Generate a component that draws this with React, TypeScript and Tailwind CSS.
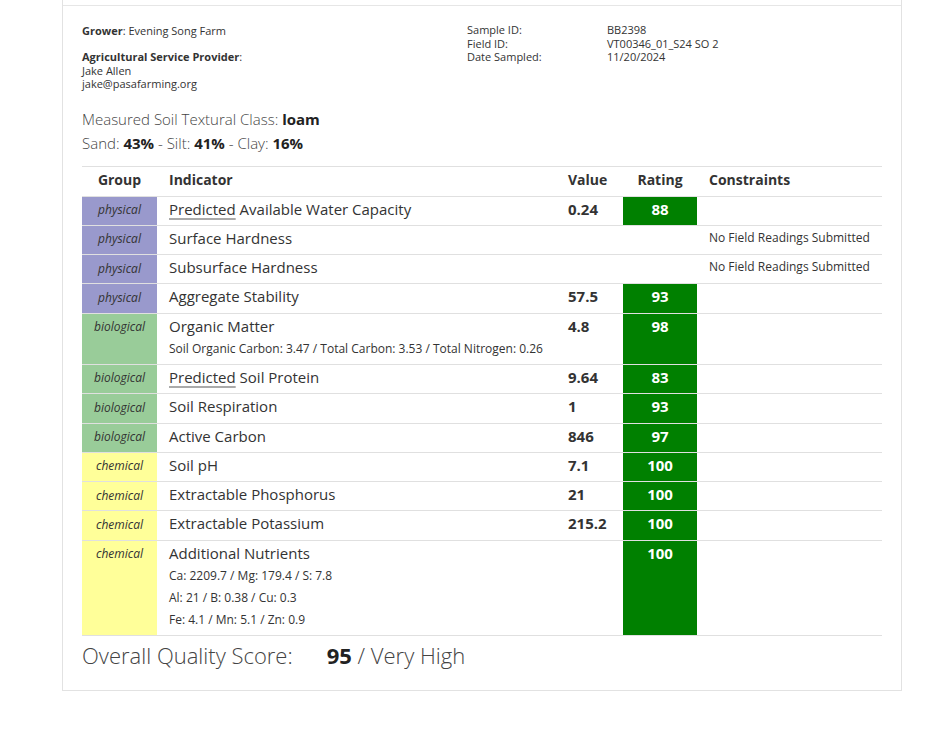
import React from "react"

type Group = "physical" | "biological" | "chemical"

interface Row {
    group: Group
    indicator: string
    predicted?: boolean
    sub?: string[]
    value?: string
    rating?: number
    constraint?: string
}

const groupBg: Record<Group, string> = {
    physical: "bg-[#9999cc]",
    biological: "bg-[#99cc99]",
    chemical: "bg-[#ffff99]",
}

const rows: Row[] = [
    { group: "physical", indicator: "Available Water Capacity", predicted: true, value: "0.24", rating: 88 },
    { group: "physical", indicator: "Surface Hardness", constraint: "No Field Readings Submitted" },
    { group: "physical", indicator: "Subsurface Hardness", constraint: "No Field Readings Submitted" },
    { group: "physical", indicator: "Aggregate Stability", value: "57.5", rating: 93 },
    {
        group: "biological",
        indicator: "Organic Matter",
        sub: ["Soil Organic Carbon: 3.47 / Total Carbon: 3.53 / Total Nitrogen: 0.26"],
        value: "4.8",
        rating: 98,
    },
    { group: "biological", indicator: "Soil Protein", predicted: true, value: "9.64", rating: 83 },
    { group: "biological", indicator: "Soil Respiration", value: "1", rating: 93 },
    { group: "biological", indicator: "Active Carbon", value: "846", rating: 97 },
    { group: "chemical", indicator: "Soil pH", value: "7.1", rating: 100 },
    { group: "chemical", indicator: "Extractable Phosphorus", value: "21", rating: 100 },
    { group: "chemical", indicator: "Extractable Potassium", value: "215.2", rating: 100 },
    {
        group: "chemical",
        indicator: "Additional Nutrients",
        sub: [
            "Ca: 2209.7 / Mg: 179.4 / S: 7.8",
            "Al: 21 / B: 0.38 / Cu: 0.3",
            "Fe: 4.1 / Mn: 5.1 / Zn: 0.9",
        ],
        rating: 100,
    },
]

export default function App() {
    return (
        <div className="min-h-screen bg-white font-['Open_Sans',sans-serif] text-[#333]">
            <div className="ml-[62px] w-[840px] border-x border-b border-[#e2e2e2] px-[19px] pb-[19px]">
                <div className="-mx-[19px] h-[6px] border-b border-[#e6e6e6]" />

                {/* sample info */}
                <div className="flex pt-[18px] text-[11px] leading-[13.5px]">
                    <div className="w-[385px]">
                        <p>
                            <b>Grower</b>: Evening Song Farm
                        </p>
                        <p className="mt-[12.5px]">
                            <b>Agricultural Service Provider</b>:
                        </p>
                        <p>Jake Allen</p>
                        <p>jake@pasafarming.org</p>
                    </div>
                    <div className="-mt-px flex">
                        <div className="w-[140px]">
                            <p>Sample ID:</p>
                            <p>Field ID:</p>
                            <p>Date Sampled:</p>
                        </div>
                        <div>
                            <p>BB2398</p>
                            <p>VT00346_01_S24 SO 2</p>
                            <p>11/20/2024</p>
                        </div>
                    </div>
                </div>

                <div className="mt-4 text-[15px] leading-[24px] font-light text-[#444]">
                    <p>
                        Measured Soil Textural Class: <b className="font-bold text-[#222]">loam</b>
                    </p>
                    <p>
                        Sand: <b className="font-bold text-[#222]">43%</b> - Silt:{" "}
                        <b className="font-bold text-[#222]">41%</b> - Clay:{" "}
                        <b className="font-bold text-[#222]">16%</b>
                    </p>
                </div>

                <table className="mt-[11px] w-[800px] table-fixed border-collapse">
                    <colgroup>
                        <col className="w-[75px]" />
                        <col className="w-[399px]" />
                        <col className="w-[67px]" />
                        <col className="w-[74px]" />
                        <col className="w-[185px]" />
                    </colgroup>
                    <thead>
                        <tr className="border-y border-[#e0e0e0] text-[14px] leading-[24px] font-bold text-[#333]">
                            <th className="pt-px pb-1 text-center">Group</th>
                            <th className="px-3 pt-px pb-1 text-left">Indicator</th>
                            <th className="px-3 pt-px pb-1 text-left">Value</th>
                            <th className="pt-px pb-1 text-center">Rating</th>
                            <th className="px-3 pt-px pb-1 text-left">Constraints</th>
                        </tr>
                    </thead>
                    <tbody>
                        {rows.map((row) => (
                            <tr key={row.indicator} className="border-b border-[#e0e0e0] align-top">
                                <td
                                    className={`${groupBg[row.group]} pb-[4.3px] text-center text-[12px] leading-[24px] italic text-[#333]`}
                                >
                                    <span className="relative top-[1.5px]">{row.group}</span>
                                </td>
                                <td className="px-3 pb-[4.3px]">
                                    <div className="text-[15px] leading-[24px]">
                                        {row.predicted && (
                                            <span className="underline decoration-[#aaa] decoration-[1.5px] underline-offset-[3px]">
                                                Predicted
                                            </span>
                                        )}
                                        {row.predicted && " "}
                                        {row.indicator}
                                    </div>
                                    {row.sub?.map((line) => (
                                        <div key={line} className="text-[12px] leading-[22px]">
                                            {line}
                                        </div>
                                    ))}
                                </td>
                                <td className="px-3 pb-[4.3px] text-[15px] leading-[24px] font-bold">
                                    {row.value}
                                </td>
                                <td
                                    className={`pb-[4.3px] text-center text-[15px] leading-[24px] font-bold text-white ${
                                        row.rating ? "bg-[#008000]" : ""
                                    }`}
                                >
                                    {row.rating}
                                </td>
                                <td className="px-3 pb-[4.3px] text-[12px] leading-[24px] text-[#333]">
                                    {row.constraint}
                                </td>
                            </tr>
                        ))}
                    </tbody>
                </table>

                <div className="mt-[3px] flex text-[22px] leading-[32px] font-light text-[#444]">
                    <span>Overall Quality Score:</span>
                    <span className="ml-[34px]">
                        <b className="font-bold text-[#222]">95</b> / Very High
                    </span>
                </div>
            </div>
        </div>
    )
}
